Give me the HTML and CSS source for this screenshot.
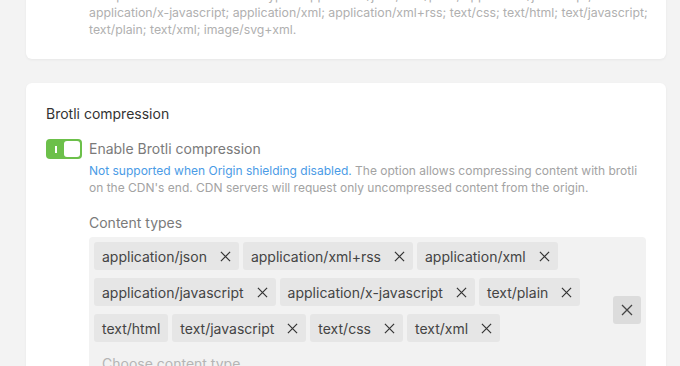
FILE: index.html
```html
<!DOCTYPE html>
<html lang="en">
<head>
    <meta charset="UTF-8">
    <meta name="viewport" content="width=device-width, initial-scale=1.0">
    <title>CDN Resource Settings</title>
    <link rel="stylesheet" href="styles.css">
</head>
<body>

    <div class="page">

        <!-- Gzip compression (scrolled) -->
        <div class="card card-top">
            <p class="note">
                Compresses content of these types: application/json; text/plain; application/javascript;<br>
                application/x-javascript; application/xml; application/xml+rss; text/css; text/html; text/javascript;<br>
                text/plain; text/xml; image/svg+xml.
            </p>
        </div>

        <!-- Brotli compression -->
        <div class="card">
            <h2 class="card-title">Brotli compression</h2>

            <div class="option">
                <div class="toggle">
                    <span class="toggle-mark"></span>
                    <span class="toggle-knob"></span>
                </div>
                <div class="option-body">
                    <div class="option-label">Enable Brotli compression</div>
                    <p class="option-desc">
                        <span class="warn">Not supported when Origin shielding disabled.</span>
                        The option allows compressing content with brotli
                        on the CDN's end. CDN servers will request only uncompressed content from the origin.
                    </p>

                    <div class="field-label">Content types</div>
                    <div class="select">
                        <div class="tags">
                            <span class="tag">application/json <svg class="x" viewBox="0 0 12 12"><path d="M1 1L11 11M11 1L1 11"/></svg></span>
                            <span class="tag">application/xml+rss <svg class="x" viewBox="0 0 12 12"><path d="M1 1L11 11M11 1L1 11"/></svg></span>
                            <span class="tag">application/xml <svg class="x" viewBox="0 0 12 12"><path d="M1 1L11 11M11 1L1 11"/></svg></span>
                            <span class="tag">application/javascript <svg class="x" viewBox="0 0 12 12"><path d="M1 1L11 11M11 1L1 11"/></svg></span>
                            <span class="tag">application/x-javascript <svg class="x" viewBox="0 0 12 12"><path d="M1 1L11 11M11 1L1 11"/></svg></span>
                            <span class="tag">text/plain <svg class="x" viewBox="0 0 12 12"><path d="M1 1L11 11M11 1L1 11"/></svg></span>
                            <span class="tag">text/html</span>
                            <span class="tag">text/javascript <svg class="x" viewBox="0 0 12 12"><path d="M1 1L11 11M11 1L1 11"/></svg></span>
                            <span class="tag">text/css <svg class="x" viewBox="0 0 12 12"><path d="M1 1L11 11M11 1L1 11"/></svg></span>
                            <span class="tag">text/xml <svg class="x" viewBox="0 0 12 12"><path d="M1 1L11 11M11 1L1 11"/></svg></span>
                            <span class="placeholder">Choose content type</span>
                        </div>
                        <button class="clear" type="button">
                            <svg viewBox="0 0 12 12"><path d="M1 1L11 11M11 1L1 11"/></svg>
                        </button>
                    </div>
                </div>
            </div>
        </div>

    </div>

</body>
</html>
```

FILE: styles.css
```css
body {
    margin: 0;
    background: #f3f3f3;
    font-family: 'Inter', 'Roboto', sans-serif;
    color: #333;
}
.page {
    display: flex;
    flex-direction: column;
    gap: 24px;
    padding: 0 14px 40px 26px;
    margin-top: -30px;
}
/* Cards */
.card {
    background: #ffffff;
    border-radius: 6px;
    box-shadow: 0 1px 3px rgba(0, 0, 0, 0.05);
    padding: 22px 20px 20px 20px;
}
.card-top {
    padding: 17px 12px 21px 63px;
}
.note {
    margin: 0;
    font-family: 'Inter', sans-serif;
    font-size: 12.3px;
    line-height: 17px;
    color: #b0b0b0;
    white-space: nowrap;
}
.card-title {
    margin: 0;
    font-size: 14px;
    font-weight: 400;
    line-height: 17px;
    color: #333;
}
/* Toggle option */
.option {
    display: flex;
    gap: 7px;
    margin-top: 17px;
}
.toggle {
    position: relative;
    flex: none;
    width: 36px;
    height: 20px;
    border-radius: 4px;
    background: #6cc04a;
}
.toggle-mark {
    position: absolute;
    left: 9px;
    top: 7px;
    width: 1.5px;
    height: 7px;
    background: #ffffff;
}
.toggle-knob {
    position: absolute;
    right: 2px;
    top: 2px;
    width: 16px;
    height: 16px;
    border-radius: 3px;
    background: #ffffff;
}
.option-body {
    flex: 1;
}
.option-label {
    font-size: 14px;
    line-height: 19px;
    color: #7a7a7a;
}
.option-desc {
    margin: 4px 0 0;
    font-size: 12px;
    line-height: 17px;
    color: #a3a3a3;
}
.warn {
    color: #4a9be6;
}
.field-label {
    margin-top: 18px;
    font-size: 14px;
    line-height: 17px;
    color: #7a7a7a;
}
/* Multi select */
.select {
    display: flex;
    align-items: center;
    margin-top: 6px;
    padding: 5px;
    background: #f2f2f2;
    border-radius: 4px;
}
.tags {
    flex: 1;
    display: flex;
    flex-wrap: wrap;
    gap: 8px 4px;
    padding-right: 8px;
}
.tag {
    display: inline-flex;
    align-items: center;
    height: 28px;
    padding: 0 8px;
    background: #e6e6e6;
    border-radius: 3px;
    font-size: 14px;
    color: #444;
}
.x {
    width: 11px;
    height: 11px;
    margin-left: 13px;
    stroke: #333;
    stroke-width: 1.3;
    fill: none;
}
.placeholder {
    width: 100%;
    height: 28px;
    line-height: 28px;
    padding-left: 8px;
    font-size: 14px;
    color: #b5b5b5;
}
.clear {
    flex: none;
    display: flex;
    align-items: center;
    justify-content: center;
    width: 28px;
    height: 28px;
    padding: 0;
    border: none;
    border-radius: 3px;
    background: #dcdcdc;
}
.clear svg {
    width: 12px;
    height: 12px;
    stroke: #444;
    stroke-width: 1.3;
    fill: none;
}
```
